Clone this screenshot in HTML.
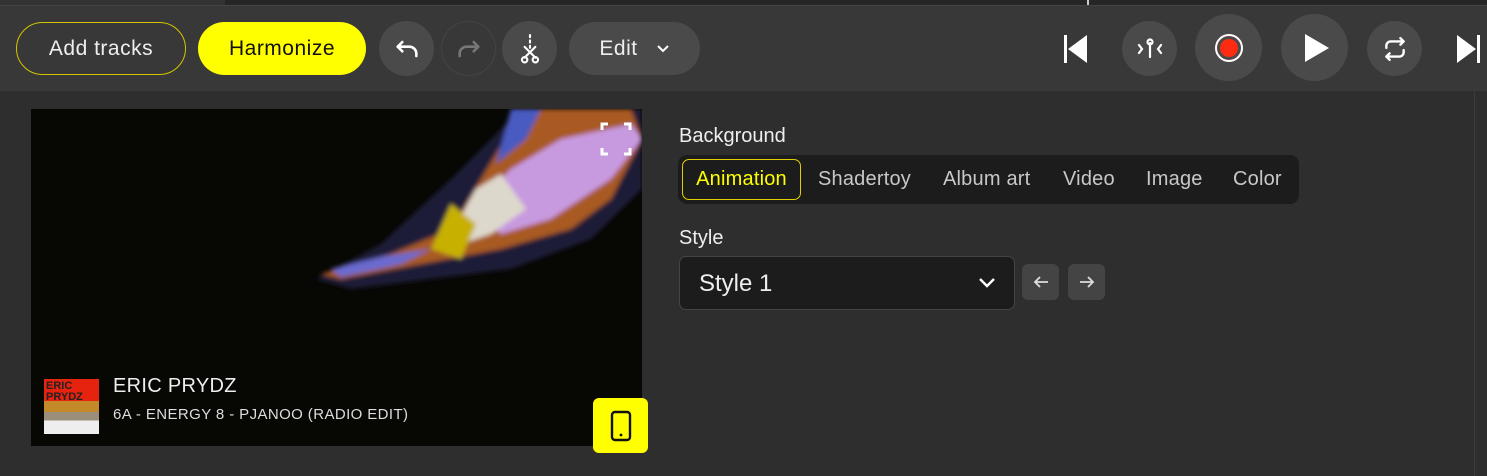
<!DOCTYPE html>
<html><head><style>
body{margin:0;width:1487px;height:476px;background:#2e2e2e;font-family:"Liberation Sans",sans-serif;position:relative;overflow:hidden;color:#eee}
.a{position:absolute}
.pill{position:absolute;top:22px;height:53px;border-radius:27px;box-sizing:border-box;display:flex;align-items:center;justify-content:center;font-size:21px;letter-spacing:0.5px}
.circ{position:absolute;border-radius:50%;background:#4a4a4a;display:flex;align-items:center;justify-content:center}
.tab{position:absolute;top:159px;height:41px;display:flex;align-items:center;font-size:20px;color:#c8c8c8;letter-spacing:0.2px}
</style></head><body>
<div class="a" style="left:0;top:0;width:1487px;height:5px;background:#262626"></div>
<div class="a" style="left:0;top:0;width:225px;height:5px;background:#333"></div>
<div class="a" style="left:1087px;top:0;width:2px;height:5px;background:#ccc"></div>
<div class="a" style="left:0;top:5px;width:1487px;height:85px;background:#383838;border-top:1px solid #444"></div>
<div class="a" style="left:1474px;top:90px;width:1px;height:386px;background:#3c3c3c"></div>

<div class="pill" style="left:16px;width:170px;border:1px solid #d6c400;color:#eee">Add tracks</div>
<div class="pill" style="left:198px;width:168px;background:#ffff00;color:#111">Harmonize</div>
<div class="circ" style="left:379px;top:21px;width:55px;height:55px"><svg width="28" height="28" viewBox="0 0 24 24" fill="none" stroke="#fff" stroke-width="2.2" stroke-linecap="round" stroke-linejoin="round"><path d="M4 10h10a6 6 0 0 1 6 6v2"/><path d="M8 6l-4 4 4 4"/></svg></div>
<div class="circ" style="left:441px;top:21px;width:55px;height:55px;background:#383838;border:1px solid #444;box-sizing:border-box"><svg width="28" height="28" viewBox="0 0 24 24" fill="none" stroke="#777" stroke-width="2.2" stroke-linecap="round" stroke-linejoin="round"><path d="M20 10H10a6 6 0 0 0-6 6v2"/><path d="M16 6l4 4-4 4"/></svg></div>
<div class="circ" style="left:502px;top:21px;width:55px;height:55px"><svg width="26" height="30" viewBox="0 0 24 28" fill="none" stroke="#fff" stroke-width="2" stroke-linecap="round"><path d="M12 1v2M12 6v2M12 11v2"/><path d="M7 12l10 10M17 12L7 22"/><circle cx="7" cy="24" r="2.5"/><circle cx="17" cy="24" r="2.5"/></svg></div>
<div class="pill" style="left:569px;width:131px;background:#4a4a4a;color:#eee">Edit<svg style="margin-left:18px" width="14" height="10" viewBox="0 0 14 10" fill="none" stroke="#fff" stroke-width="2"><path d="M2 2l5 5 5-5"/></svg></div>

<svg class="a" style="left:1062px;top:34px" width="28" height="30" viewBox="0 0 28 30"><rect x="2" y="1" width="3" height="28" fill="#fff"/><path d="M25 1v28L6 15z" fill="#fff"/></svg>
<div class="circ" style="left:1122px;top:21px;width:55px;height:55px"><svg width="28" height="24" viewBox="0 0 28 24" fill="none" stroke="#fff" stroke-width="2.2" stroke-linecap="round"><path d="M3 8l3 4-3 4M25 8l-3 4 3 4M14 6v14"/><circle cx="14" cy="5" r="2.5"/></svg></div>
<div class="circ" style="left:1195px;top:14px;width:67px;height:67px"><div style="width:24px;height:24px;border-radius:50%;background:#ff2a12;border:2px solid #fff;box-shadow:0 0 0 3px #4a4a4a inset"></div></div>
<div class="circ" style="left:1281px;top:14px;width:67px;height:67px"><svg width="30" height="30" viewBox="0 0 30 30"><path d="M5 1l24 14L5 29z" fill="#fff"/></svg></div>
<div class="circ" style="left:1367px;top:21px;width:55px;height:55px"><svg width="28" height="26" viewBox="0 0 24 24" fill="none" stroke="#fff" stroke-width="2.2" stroke-linecap="round" stroke-linejoin="round"><path d="M17 2l3 3-3 3M4 11V9a4 4 0 0 1 4-4h12M7 22l-3-3 3-3M20 13v2a4 4 0 0 1-4 4H4"/></svg></div>
<svg class="a" style="left:1455px;top:34px" width="28" height="30" viewBox="0 0 28 30"><path d="M2 1v28L21 15z" fill="#fff"/><rect x="22" y="1" width="3" height="28" fill="#fff"/></svg>

<div class="a" style="left:31px;top:109px;width:611px;height:337px;background:#070703;overflow:hidden">
<svg width="611" height="337" viewBox="0 0 611 337">
<defs><filter id="b"><feGaussianBlur stdDeviation="2.5"/></filter></defs>
<g filter="url(#b)">
<path d="M285 170 L350 135 L420 70 L470 20 L490 0 L611 0 L611 80 L560 130 L480 160 L400 170 L320 180 Z" fill="#1c1e38"/>
<path d="M290 165 L360 145 L420 120 L450 70 L480 20 L500 0 L600 0 L611 30 L580 90 L540 120 L470 140 L390 155 L310 170 Z" fill="#a85a22"/>
<path d="M440 100 L480 60 L530 30 L600 15 L611 30 L580 70 L520 110 L470 125 Z" fill="#c79ae0"/>
<path d="M420 125 L445 80 L470 65 L495 100 L460 125 L430 135 Z" fill="#ddd8cc"/>
<path d="M400 140 L420 95 L445 115 L430 150 Z" fill="#c8b000"/>
<path d="M300 160 L350 148 L400 140 L370 155 L310 168 Z" fill="#6a6ad0"/>
<path d="M480 0 L510 0 L495 30 L465 55 Z" fill="#4a5ac0"/>
</g>
<path d="M571 21v-6h6M593 15h6v6M599 39v6h-6M577 45h-6v-6" fill="none" stroke="#fff" stroke-width="3"/>
</svg>
<div class="a" style="left:13px;top:270px;width:55px;height:55px;background:linear-gradient(180deg,#e6230f 0 40%,#c48a2a 40% 60%,#9a8f7a 60% 75%,#eee 75%)"><div style="font-size:11px;color:#222;font-weight:bold;line-height:11px;padding:2px">ERIC<br>PRYDZ</div></div>
<div class="a" style="left:82px;top:266px;font-size:20px;color:#eee;letter-spacing:0.3px">ERIC PRYDZ</div>
<div class="a" style="left:82px;top:297px;font-size:15px;color:#ddd;letter-spacing:0.4px">6A - ENERGY 8 - PJANOO (RADIO EDIT)</div>
</div>
<div class="a" style="left:593px;top:398px;width:55px;height:55px;background:#ffff00;border-radius:6px;display:flex;align-items:center;justify-content:center"><svg width="22" height="32" viewBox="0 0 22 32"><rect x="2" y="2" width="18" height="28" rx="3" fill="none" stroke="#111" stroke-width="2.4"/><circle cx="11" cy="25" r="1.4" fill="#111"/></svg></div>

<div class="a" style="left:679px;top:125px;font-size:20px;color:#eee">Background</div>
<div class="a" style="left:678px;top:155px;width:621px;height:49px;background:#1c1c1c;border-radius:9px"></div>
<div class="tab" style="left:682px;width:119px;border:1px solid #e0d000;border-radius:7px;box-sizing:border-box;justify-content:center;color:#ffff00">Animation</div>
<div class="tab" style="left:818px">Shadertoy</div>
<div class="tab" style="left:943px">Album art</div>
<div class="tab" style="left:1063px">Video</div>
<div class="tab" style="left:1146px">Image</div>
<div class="tab" style="left:1233px">Color</div>

<div class="a" style="left:679px;top:227px;font-size:20px;color:#eee">Style</div>
<div class="a" style="left:679px;top:256px;width:336px;height:54px;background:#1c1c1c;border:1px solid #444;border-radius:7px;box-sizing:border-box"></div>
<div class="a" style="left:699px;top:270px;font-size:24px;color:#eee">Style 1</div>
<svg class="a" style="left:978px;top:277px" width="18" height="12" viewBox="0 0 18 12" fill="none" stroke="#fff" stroke-width="2.4"><path d="M2 2l7 7 7-7"/></svg>
<div class="a" style="left:1022px;top:264px;width:37px;height:36px;background:#444;border-radius:6px;display:flex;align-items:center;justify-content:center"><svg width="16" height="14" viewBox="0 0 16 14" fill="none" stroke="#ddd" stroke-width="1.8"><path d="M15 7H2M7 2L2 7l5 5"/></svg></div>
<div class="a" style="left:1068px;top:264px;width:37px;height:36px;background:#444;border-radius:6px;display:flex;align-items:center;justify-content:center"><svg width="16" height="14" viewBox="0 0 16 14" fill="none" stroke="#ddd" stroke-width="1.8"><path d="M1 7h13M9 2l5 5-5 5"/></svg></div>
</body></html>
